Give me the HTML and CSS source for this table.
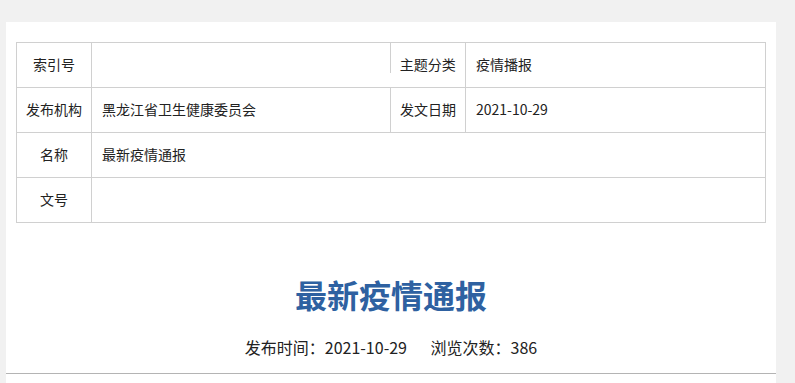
FILE: index.html
```html
<!DOCTYPE html>
<html lang="zh-CN">
<head>
  <meta charset="UTF-8" />
  <title>最新疫情通报</title>
  <meta name="viewport" content="width=device-width, initial-scale=1.0" />
  <link rel="stylesheet" href="styles.css">
</head>
<body>
  <div class="panel">
    <table class="info-table">
      <colgroup>
        <col class="col-label" />
        <col class="col-value" />
        <col class="col-label" />
        <col class="col-rest" />
      </colgroup>
      <tr>
        <td class="label">索引号</td>
        <td class="value value-split"><div class="split-mark"></div></td>
        <td class="label label-split">主题分类</td>
        <td class="value">疫情播报</td>
      </tr>
      <tr>
        <td class="label">发布机构</td>
        <td class="value">黑龙江省卫生健康委员会</td>
        <td class="label">发文日期</td>
        <td class="value">2021-10-29</td>
      </tr>
      <tr>
        <td class="label">名称</td>
        <td class="value" colspan="3">最新疫情通报</td>
      </tr>
      <tr>
        <td class="label">文号</td>
        <td class="value" colspan="3"></td>
      </tr>
    </table>

    <div class="article-head">
      <h1 class="article-title">最新疫情通报</h1>
      <div class="article-meta">
        <span>发布时间：2021-10-29</span>
        <span>浏览次数：386</span>
      </div>
    </div>
  </div>
</body>
</html>
```

FILE: styles.css
```css
body {
  margin: 0;
  padding: 22px 0 0 6px;
  background: #f1f1f1;
  font-family: "Noto Sans CJK SC", "Microsoft YaHei", sans-serif;
  color: #222;
}

.panel {
  width: 770px;
  height: 341px;
  background: #fff;
  padding-top: 20px;
}

.info-table {
  width: 750px;
  margin: 0 10px;
  border-collapse: collapse;
  table-layout: fixed;
  font-size: 14px;
}

.col-label {
  width: 75px;
}

.col-value {
  width: 299px;
}

.info-table td {
  height: 42px;
  border: 1px solid #d0d0d0;
  padding: 0 10px 2px;
  vertical-align: middle;
}

.info-table .label {
  text-align: center;
  padding: 0 0 2px;
}

/* first row: the divider between the two halves only runs part way down */
.info-table .value-split {
  border-right: none;
  vertical-align: top;
  padding: 0;
}

.info-table .label-split {
  border-left: none;
}

.split-mark {
  height: 30px;
  border-right: 1px solid #d0d0d0;
}

.article-head {
  margin-top: 47px;
  padding-bottom: 14px;
  border-bottom: 1px solid #b4b4b4;
  text-align: center;
}

.article-title {
  margin: 0;
  font-size: 32px;
  line-height: 48px;
  font-weight: bold;
  color: #2e61a1;
}

.article-meta {
  margin-top: 17px;
  font-size: 16px;
  line-height: 24px;
  color: #222;
}

.article-meta span + span {
  margin-left: 20px;
}
```
